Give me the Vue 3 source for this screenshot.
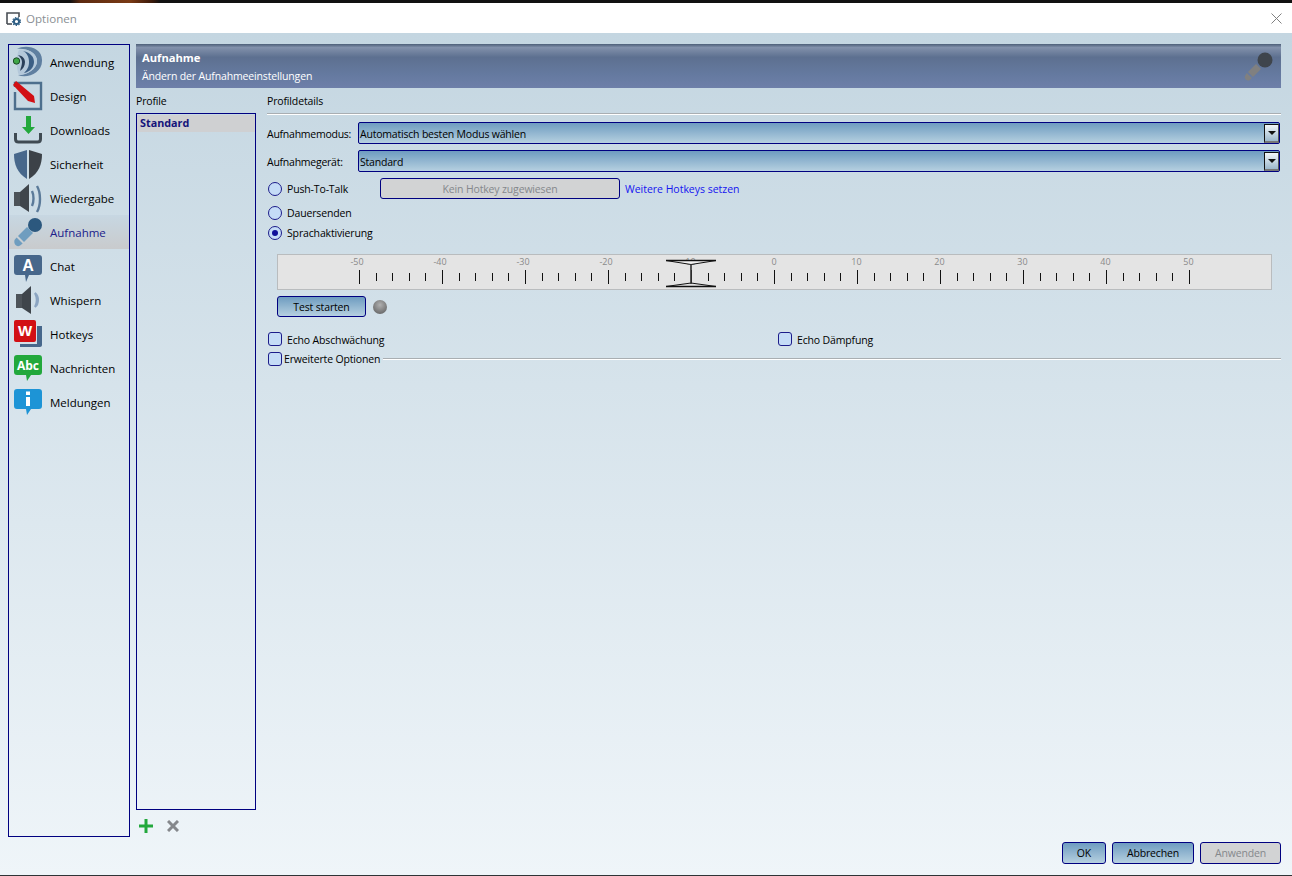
<template>
  <div class="window">
    <div class="desktop-strip"></div>
    <div class="titlebar">
      <svg class="title-icon" width="15" height="15" viewBox="0 0 15 15">
        <path d="M1 13V2h12v4" fill="none" stroke="#4a4f55" stroke-width="1.6" />
        <path d="M1 13h5" stroke="#4a4f55" stroke-width="1.6" />
        <circle cx="10.5" cy="10.5" r="2.6" fill="none" stroke="#2f5f85" stroke-width="2" />
        <circle cx="10.5" cy="10.5" r="4" fill="none" stroke="#2f5f85" stroke-width="1.2" stroke-dasharray="1.4 1.4" />
      </svg>
      <span class="title-text">Optionen</span>
      <svg class="close-icon" width="11" height="11" viewBox="0 0 11 11">
        <path d="M0.5 0.5l10 10M10.5 0.5l-10 10" stroke="#808080" stroke-width="1" />
      </svg>
    </div>

    <div class="body">
      <nav class="sidebar">
        <div v-for="item in navItems" :key="item.label" :class="['nav-item', { active: item.label === 'Aufnahme' }]">
          <svg class="nav-icon" width="30" height="34" viewBox="0 0 30 34" v-html="item.icon"></svg>
          <span>{{ item.label }}</span>
        </div>
      </nav>

      <div class="right">
        <header class="banner">
          <div>
            <div class="banner-title">Aufnahme</div>
            <div class="banner-sub">Ändern der Aufnahmeeinstellungen</div>
          </div>
          <svg width="30" height="30" viewBox="0 0 30 30">
            <circle cx="22" cy="8" r="7.5" fill="#3f454c" />
            <path d="M13 12l5 5-8 8-5-5z" fill="#808080" />
            <path d="M3.800 21l5 5-2 2c-1.500 1-3 .6-4-.4s-1.300-2.400-.8-3.600z" fill="#808080" />
          </svg>
        </header>

        <div class="main">
          <section class="profiles">
            <div class="section-label">Profile</div>
            <div class="profile-list">
              <div class="profile-row">Standard</div>
            </div>
            <div class="profile-tools">
              <svg width="14" height="14" viewBox="0 0 14 14">
                <path d="M7 0v14M0 7h14" stroke="#22a83c" stroke-width="3" />
              </svg>
              <svg width="12" height="12" viewBox="0 0 12 12">
                <path d="M1 1l10 10M11 1L1 11" stroke="#85888c" stroke-width="3" />
              </svg>
            </div>
          </section>

          <section class="details">
            <div class="section-label">Profildetails</div>
            <div class="rule"></div>

            <div class="field">
              <label>Aufnahmemodus:</label>
              <div class="combo"><span>Automatisch besten Modus wählen</span><i class="combo-btn"><b></b></i></div>
            </div>
            <div class="field second">
              <label>Aufnahmegerät:</label>
              <div class="combo"><span>Standard</span><i class="combo-btn"><b></b></i></div>
            </div>

            <div class="ptt-row">
              <span class="radio"></span>
              <span class="radio-label ptt-label">Push-To-Talk</span>
              <button class="btn hotkey" disabled>Kein Hotkey zugewiesen</button>
              <span class="link">Weitere Hotkeys setzen</span>
            </div>
            <div class="radio-row first-radio"><span class="radio"></span><span class="radio-label">Dauersenden</span></div>
            <div class="radio-row second-radio"><span class="radio checked"></span><span class="radio-label">Sprachaktivierung</span></div>

            <svg class="ruler" width="995" height="36" viewBox="0 0 995 36">
              <rect x="0.500" y="0.500" width="994" height="35" fill="#e4e4e4" stroke="#b9bcbe" />
              <text v-for="l in rulerLabels" :key="l.value" :x="l.x" y="11" text-anchor="middle" class="ruler-text">{{ l.value }}</text>
              <line v-for="t in rulerTicks" :key="t.x" :x1="t.x" :x2="t.x" :y1="t.major ? 16 : 19" :y2="t.major ? 30 : 27" stroke="#111" stroke-width="1" />
              <path d="M389 6.500h50l-25 4z" fill="#f4f4f4" stroke="#111" stroke-width="1" />
              <path d="M389 32.500h50l-25-3.500z" fill="#e4e4e4" stroke="#111" stroke-width="1" />
              <path d="M389 6.500h50M389 32.500h50" stroke="#111" stroke-width="1.400" />
              <line x1="414" x2="414" y1="10" y2="30" stroke="#333" stroke-width="1.600" />
            </svg>

            <div class="test-row">
              <button class="btn test">Test starten</button>
              <span class="led"></span>
            </div>

            <div class="echo-row">
              <div class="check-item echo-first"><span class="check"></span><span class="radio-label">Echo Abschwächung</span></div>
              <div class="check-item"><span class="check"></span><span class="radio-label">Echo Dämpfung</span></div>
            </div>
            <div class="advanced">
              <span class="check"></span>
              <span class="advanced-label">Erweiterte Optionen</span>
              <span class="advanced-line"></span>
            </div>
          </section>
        </div>

        <footer class="footer">
          <button class="btn ok">OK</button>
          <button class="btn cancel">Abbrechen</button>
          <button class="btn apply" disabled>Anwenden</button>
        </footer>
      </div>
    </div>
    <div class="bottom-edge"></div>
  </div>
</template>

<script setup>
const speaker = (x, waves) => `
  <path d="M${x} 11h6v14h-6z" fill="#4d5359"/>
  <path d="M${x + 6} 11l9-8v28l-9-6z" fill="#3f454b"/>
  ${waves}`

const bubble = 'M4 4h22c2 0 3 1 3 3v14c0 2-1 3-3 3H18l-4 6-1-6H4c-2 0-3-1-3-3V7c0-2 1-3 3-3z'

const navItems = [
  {
    label: 'Anwendung',
    icon: `
      <path d="M4 4C12-1 30 2 29 16 29 28 14 34 5 30 14 30 24 24 24 16 24 8 14 3 4 4z" fill="#5f7fa0"/>
      <path d="M6 5C14 3 24 8 24 16S14 30 6 30C3 24 3 10 6 5z" fill="#b4c8da"/>
      <path d="M10 6C18 8 21 12 21 17 21 22 17 27 11 28 15 24 16 21 16 17 16 12 14 8 10 6z" fill="#3c5f85"/>
      <path d="M5 10C10 11 12 14 12 17 12 21 10 24 7 26 8 22 9 20 9 17 9 14 7 12 5 10z" fill="#2a3f5a"/>
      <circle cx="3.500" cy="16" r="3.200" fill="#3fa648" stroke="#1d4a28"/>`,
  },
  {
    label: 'Design',
    icon: `
      <path d="M2 8V4h26v26H2V13" fill="none" stroke="#4d6f8d" stroke-width="2.400"/>
      <path d="M0 6l3-4 18 15 1 7-7-2z" fill="#d20f14"/>`,
  },
  {
    label: 'Downloads',
    icon: `
      <path d="M13 3h5v11h4l-6.500 7L9 14h4z" fill="#22a83c"/>
      <path d="M2.500 20v6c0 2 1 3 3 3h19c2 0 3-1 3-3v-6" fill="none" stroke="#3f4a52" stroke-width="3"/>`,
  },
  {
    label: 'Sicherheit',
    icon: `
      <path d="M14 3L1 7c0 10 3 19 13 25z" fill="#47678b"/>
      <path d="M16 3l13 4c0 10-3 19-13 25z" fill="#3c4248"/>`,
  },
  {
    label: 'Wiedergabe',
    icon: speaker(1, `
      <path d="M19 10c2 4 2 11 0 15" fill="none" stroke="#5b7a99" stroke-width="2.400"/>
      <path d="M24 5c4 7 4 19 0 26" fill="none" stroke="#5b7a99" stroke-width="2.400"/>`),
  },
  {
    label: 'Aufnahme',
    icon: `
      <circle cx="22" cy="10" r="7" fill="#2c587e"/>
      <path d="M14 12l6 6-9 9-6-6z" fill="#6f9dbf"/>
      <path d="M3.600 22.500l6 6-2.500 2c-1.500 1-3.500.8-4.600-.5S1 27 1.500 25z" fill="#6f9dbf"/>`,
  },
  {
    label: 'Chat',
    icon: `
      <path d="M4 6h22c2 0 3 1 3 3v14c0 2-1 3-3 3H16l-3 7-1-7H4c-2 0-3-1-3-3V9c0-2 1-3 3-3z" fill="#47678b"/>
      <text x="15" y="22" text-anchor="middle" font-family="Liberation Sans, sans-serif" font-weight="700" font-size="16" fill="#fff">A</text>`,
  },
  {
    label: 'Whispern',
    icon: speaker(3, `
      <path d="M22 10c4 3 4 11 0 14 2-4 2-10 0-14z" fill="#8ca5c2" stroke="#8ca5c2" stroke-width="2"/>`),
  },
  {
    label: 'Hotkeys',
    icon: `
      <path d="M7 27h17V9h5v19c0 1-1 2-2 2H7z" fill="#47678b"/>
      <rect x="1" y="3" width="22" height="22" rx="2" fill="#d20f14"/>
      <text x="12" y="19" text-anchor="middle" font-family="Liberation Sans, sans-serif" font-weight="700" font-size="15" fill="#fff">W</text>`,
  },
  {
    label: 'Nachrichten',
    icon: `
      <path d="${bubble}" fill="#22a83c"/>
      <text x="15" y="19" text-anchor="middle" font-family="Open Sans, sans-serif" font-weight="700" font-size="12" fill="#fff">Abc</text>`,
  },
  {
    label: 'Meldungen',
    icon: `
      <path d="${bubble}" fill="#1d94d6"/>
      <rect x="13" y="6.500" width="4" height="3.500" fill="#fff"/>
      <rect x="13" y="12" width="4" height="9" fill="#fff"/>`,
  },
]

// one label every 83px, the minus sign pushes negative ones a bit left
const rulerLabels = Array.from({ length: 11 }, (_, i) => {
  const value = -50 + i * 10
  return { value, x: 83 + i * 83 + (value < 0 ? -3 : value === 0 ? -1 : -1.5) }
})

const rulerTicks = Array.from({ length: 51 }, (_, i) => ({
  x: Math.round(83 + i * 16.6) - 0.5,
  major: i % 5 === 0,
}))
</script>

<style>
html, body { margin: 0; background: #c5d7e2; }
</style>

<style scoped>
.window { width: 1292px; height: 876px; display: flex; flex-direction: column; overflow: hidden; font-family: "Open Sans", "Liberation Sans", sans-serif; font-size: 10.5px; letter-spacing: -0.15px; color: #000; }
.desktop-strip { height: 3px; background: linear-gradient(90deg, #111 0, #111 70px, #5c2a10 80px, #7a3a15 130px, #3a1a0a 152px, #111 160px); }
.titlebar { height: 30px; background: #fff; display: flex; align-items: center; padding: 0 10px 0 6px; gap: 5px; }
.title-icon { flex: none; }
.title-text { font-size: 11.6px; letter-spacing: 0; color: #8a8f94; flex: 1; }
.body { flex: 1; min-height: 0; display: flex; gap: 6px; padding: 11px 11px 11px 8px; background: linear-gradient(180deg, #c4d6e1 0%, #eff5f9 100%); }
.bottom-edge { height: 1px; background: #2f3336; }

.sidebar { width: 122px; box-sizing: border-box; margin-bottom: 27px; border: 1px solid #000080; flex: none; }
.nav-item { height: 34px; display: flex; align-items: center; gap: 7px; padding-left: 4px; font-size: 11.5px; letter-spacing: 0; }
.nav-item.active { background: linear-gradient(180deg, #c7d7e2, #c9cbcd); color: #20208a; }
.nav-icon { flex: none; }

.right { flex: 1; min-width: 0; display: flex; flex-direction: column; }
.banner { height: 44px; flex: none; box-sizing: border-box; padding: 2px 8px 0 6px; display: flex; justify-content: space-between; align-items: center; background: linear-gradient(180deg, #4d5f78 0, #8291ab 8%, #5d7090 30%, #657aa0 70%, #6e7fa9 100%); color: #fff; }
.banner-title { font-weight: 700; font-size: 11.2px; letter-spacing: 0; line-height: 18px; }
.banner-sub { line-height: 18px; }

.main { flex: 1; min-height: 0; display: flex; gap: 11px; }
.profiles { width: 120px; flex: none; display: flex; flex-direction: column; }
.section-label { height: 25px; line-height: 26px; }
.profile-list { flex: 1; min-height: 0; box-sizing: border-box; border: 1px solid #000080; padding-top: 1px; }
.profile-row { height: 17px; line-height: 15px; padding-left: 3px; font-weight: 700; font-size: 10.8px; letter-spacing: 0; color: #14147a; background: #cfd0d2; }
.profile-tools { height: 27px; flex: none; display: flex; align-items: center; gap: 14px; padding-left: 3px; padding-top: 5px; box-sizing: border-box; }

.details { flex: 1; min-width: 0; }
.rule { height: 1px; background: #a9aeb2; border-bottom: 1px solid #fff; margin-bottom: 7px; }
.field { display: flex; align-items: center; height: 22px; }
.field.second { margin-top: 6px; }
.field label { width: 91px; flex: none; padding-top: 2px; letter-spacing: -0.25px; }
.combo { flex: 1; height: 22px; box-sizing: border-box; margin-right: 1px; border: 1px solid #000080; border-radius: 2px; padding-left: 1px; display: flex; justify-content: space-between; align-items: center; background: linear-gradient(180deg, #6e9cc0, #b6d0e0); }
.combo span { padding-top: 2px; letter-spacing: -0.2px; }
.combo-btn { width: 15px; height: 19px; box-sizing: border-box; border: 1px solid #111; border-right: 1px solid #555; border-bottom: 2px solid #777; background: linear-gradient(180deg, #f2f6f9, #9cb8cc); display: flex; align-items: center; justify-content: center; }
.combo-btn b { width: 0; height: 0; border-left: 4px solid transparent; border-right: 4px solid transparent; border-top: 4px solid #111; }

.ptt-row { display: flex; align-items: center; height: 21px; margin-top: 6px; padding-left: 1px; }
.ptt-label { width: 93px; flex: none; }
.radio { width: 12px; height: 12px; flex: none; border: 1px solid #1c1c8a; border-radius: 50%; background: #c5dcf7; display: block; position: relative; }
.radio.checked::after { content: ""; position: absolute; left: 3px; top: 3px; width: 6px; height: 6px; border-radius: 50%; background: #10109a; }
.radio-label { margin-left: 5px; }
.radio-row { display: flex; align-items: center; height: 14px; padding-left: 1px; }
.first-radio { margin-top: 7px; }
.second-radio { margin-top: 6px; }
.btn { font: inherit; letter-spacing: inherit; height: 21px; padding: 0; box-sizing: border-box; border: 1px solid #000080; border-radius: 3px; color: #000; background: linear-gradient(180deg, #6e9cc0, #b6d0e0); }
.btn:disabled { background: #d2d3d4; color: #85888c; }
.hotkey { width: 240px; }
.link { color: #1414f0; margin-left: 5px; letter-spacing: -0.02px; }
.ruler { display: block; margin: 14px 0 0 10px; }
.ruler-text { font-family: "Open Sans", "Liberation Sans", sans-serif; font-size: 9px; letter-spacing: 0; fill: #8a8a8a; }
.test-row { display: flex; align-items: center; gap: 7px; margin: 6px 0 0 10px; }
.test { width: 89px; }
.led { width: 14px; height: 14px; border-radius: 50%; background: radial-gradient(circle at 50% 35%, #b0b0b0, #6e6e6e 75%); }
.echo-row { display: flex; margin-top: 15px; padding-left: 1px; height: 14px; }
.check-item { display: flex; align-items: center; }
.check-item .radio-label { padding-top: 2px; }
.echo-first { width: 510px; }
.check { width: 12px; height: 12px; flex: none; border: 1px solid #1c1c8a; border-radius: 3px; background: #c5dcf7; display: block; }
.advanced { display: flex; align-items: center; margin-top: 6px; padding-left: 1px; height: 14px; }
.advanced-label { margin-left: 2px; }
.advanced-line { flex: 1; height: 1px; background: #a9aeb2; border-bottom: 1px solid #fff; margin-left: 3px; }

.footer { flex: none; display: flex; justify-content: flex-end; gap: 6px; height: 22px; padding-top: 5px; }
.footer .btn { height: 22px; }
.ok { width: 44px; }
.cancel { width: 82px; }
.apply { width: 81px; }
</style>
